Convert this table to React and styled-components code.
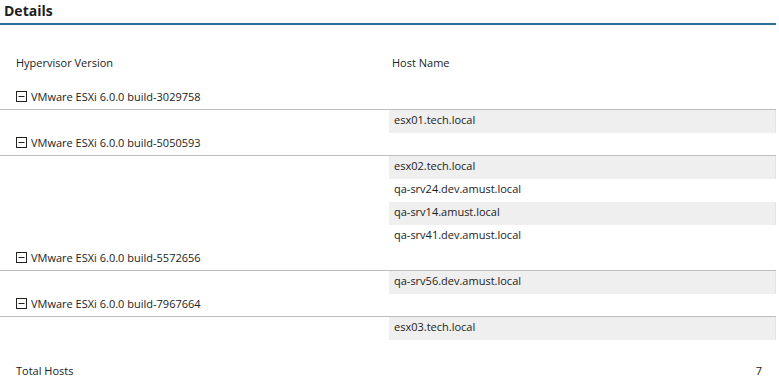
import styled, { createGlobalStyle } from 'styled-components';

const GlobalStyle = createGlobalStyle`
    body {
        margin: 0;
        background: #ffffff;
        font-family: "Open Sans", "Noto Sans", sans-serif;
        color: #222222;
    }
`;

const Panel = styled.div`
    width: 776px;
`;

const TitleBar = styled.div`
    height: 23px;
    padding: 0 4px;
    border-bottom: 2px solid #2a6e9b;
    font-size: 14px;
    font-weight: 700;
    line-height: 21px;
    color: #1e1e1e;
`;

const Row = styled.div`
    display: grid;
    grid-template-columns: 389px 1fr;
    height: 23px;
    font-size: 11px;
    line-height: 20px;
`;

const HeadRow = styled(Row)`
    margin-top: 28px;
    margin-bottom: 11px;
`;

const GroupRow = styled.div`
    box-sizing: border-box;
    height: 23px;
    padding-bottom: 3px;
    border-bottom: 1px solid #bdbdbd;
    display: flex;
    align-items: center;
    gap: 4px;
    padding-left: 16px;
    font-size: 11px;
`;

const Cell = styled.div`
    padding-left: ${p => p.$indent || 5}px;
    background: ${p => p.$shade ? '#efefef' : 'transparent'};
    border-right: ${p => p.$shade ? '1px solid #e4e4e4' : 'none'};
    white-space: nowrap;
`;

const TotalRow = styled.div`
    display: flex;
    justify-content: space-between;
    margin-top: 22px;
    padding: 0 14px 0 16px;
    font-size: 11px;
    line-height: 18px;
`;

function MinusBox(){
    return(
        <svg width="11" height="11" viewBox="0 0 11 11">
            <rect x="0.5" y="0.5" width="10" height="10" fill="none" stroke="#222" />
            <line x1="2.5" y1="5.5" x2="8.5" y2="5.5" stroke="#222" />
        </svg>
    )
}

const groups = [
    { version: 'VMware ESXi 6.0.0 build-3029758', hosts: ['esx01.tech.local'] },
    { version: 'VMware ESXi 6.0.0 build-5050593', hosts: ['esx02.tech.local', 'qa-srv24.dev.amust.local', 'qa-srv14.amust.local', 'qa-srv41.dev.amust.local'] },
    { version: 'VMware ESXi 6.0.0 build-5572656', hosts: ['qa-srv56.dev.amust.local'] },
    { version: 'VMware ESXi 6.0.0 build-7967664', hosts: ['esx03.tech.local'] },
];

export default function App(){
    const total = groups.reduce((n, g) => n + g.hosts.length, 0);
    return(
        <Panel>
            <GlobalStyle />
            <TitleBar>Details</TitleBar>
            <HeadRow>
                <Cell $indent={16}>Hypervisor Version</Cell>
                <Cell $indent={3}>Host Name</Cell>
            </HeadRow>
            {groups.map(g => (
                <div key={g.version}>
                    <GroupRow>
                        <MinusBox />
                        <span>{g.version}</span>
                    </GroupRow>
                    {g.hosts.map((h, i) => (
                        <Row key={h}>
                            <Cell />
                            <Cell $shade={i % 2 === 0}>{h}</Cell>
                        </Row>
                    ))}
                </div>
            ))}
            <TotalRow>
                <span>Total Hosts</span>
                <span>{total}</span>
            </TotalRow>
        </Panel>
    )
}
